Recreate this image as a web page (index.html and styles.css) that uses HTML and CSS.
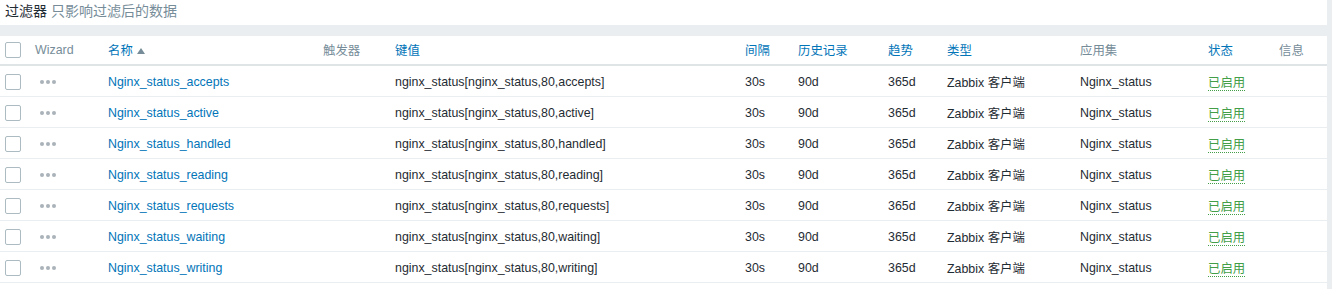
FILE: index.html
```html
<!DOCTYPE html>
<html lang="zh-CN">
<head>
    <meta charset="UTF-8">
    <title>监控项</title>
    <link rel="stylesheet" href="styles.css">
</head>
<body>
    <div class="page">
        <div class="filter-title">过滤器 <span class="filter-hint">只影响过滤后的数据</span></div>
        <div class="gap"></div>
        <div class="list">
            <table class="items">
                <colgroup>
                    <col style="width:30px"><col style="width:73px"><col style="width:215px"><col style="width:72px">
                    <col style="width:350px"><col style="width:53px"><col style="width:90px"><col style="width:59px">
                    <col style="width:133px"><col style="width:128px"><col style="width:71px"><col style="width:53px">
                </colgroup>
                <thead>
                    <tr>
                        <th><span class="check"></span></th>
                        <th class="muted">Wizard</th>
                        <th><a href="#">名称</a><span class="arrow"></span></th>
                        <th class="muted">触发器</th>
                        <th><a href="#">键值</a></th>
                        <th><a href="#">间隔</a></th>
                        <th><a href="#">历史记录</a></th>
                        <th><a href="#">趋势</a></th>
                        <th><a href="#">类型</a></th>
                        <th class="muted">应用集</th>
                        <th><a href="#">状态</a></th>
                        <th class="muted">信息</th>
                    </tr>
                </thead>
                <tbody id="rows"></tbody>
            </table>
        </div>
    </div>
    <script>
        const names = ['accepts', 'active', 'handled', 'reading', 'requests', 'waiting', 'writing'];
        const body = document.getElementById('rows');
        names.forEach(n => {
            const tr = document.createElement('tr');
            tr.innerHTML = `
                <td><span class="check"></span></td>
                <td><svg class="dots" width="18" height="6" viewBox="0 0 18 6"><circle cx="3" cy="3" r="2"/><circle cx="9" cy="3" r="2"/><circle cx="15" cy="3" r="2"/></svg></td>
                <td><a href="#">Nginx_status_${n}</a></td>
                <td></td>
                <td>nginx_status[nginx_status,80,${n}]</td>
                <td>30s</td>
                <td>90d</td>
                <td>365d</td>
                <td>Zabbix 客户端</td>
                <td>Nginx_status</td>
                <td><a href="#" class="enabled">已启用</a></td>
                <td></td>`;
            body.appendChild(tr);
        });
    </script>
</body>
</html>
```

FILE: styles.css
```css
body {
    margin: 0;
    background: #ebeef0;
    font-family: "Liberation Sans", Arial, "Noto Sans CJK SC", sans-serif;
    font-size: 12.4px;
    color: #1f2c33;
}

.page {
    margin-right: 5px;
}

a {
    color: #0275b8;
    text-decoration: none;
}

.filter-title {
    background: #fff;
    height: 25px;
    padding: 3px 5px 0;
    box-sizing: border-box;
    font-size: 14px;
    line-height: 17px;
    color: #1f2c33;
}

.filter-hint {
    color: #768d99;
}

.gap {
    height: 11px;
}

.list {
    background: #fff;
    padding-bottom: 6px;
}

.items {
    width: 1327px;
    table-layout: fixed;
    border-collapse: collapse;
}

.items th,
.items td {
    text-align: left;
    padding: 0 5px;
    white-space: nowrap;
    font-weight: normal;
}

.items th {
    height: 28px;
    border-bottom: 2px solid #dfe4e7;
}

.items td {
    height: 28px;
    padding-top: 2px;
    border-bottom: 1px solid #ebeef0;
}

.items th.muted {
    color: #768d99;
}

.check {
    display: block;
    width: 14px;
    height: 14px;
    border: 1px solid #acbbc2;
    border-radius: 2px;
    background: #fff;
}

.arrow {
    display: inline-block;
    margin-left: 4px;
    vertical-align: 1px;
    border-left: 4px solid transparent;
    border-right: 4px solid transparent;
    border-bottom: 6px solid #768d99;
}

.dots {
    display: block;
    margin-left: 4px;
    fill: #a9b3b9;
}

.enabled {
    color: #429e47;
    border-bottom: 1px dotted #429e47;
}
```
